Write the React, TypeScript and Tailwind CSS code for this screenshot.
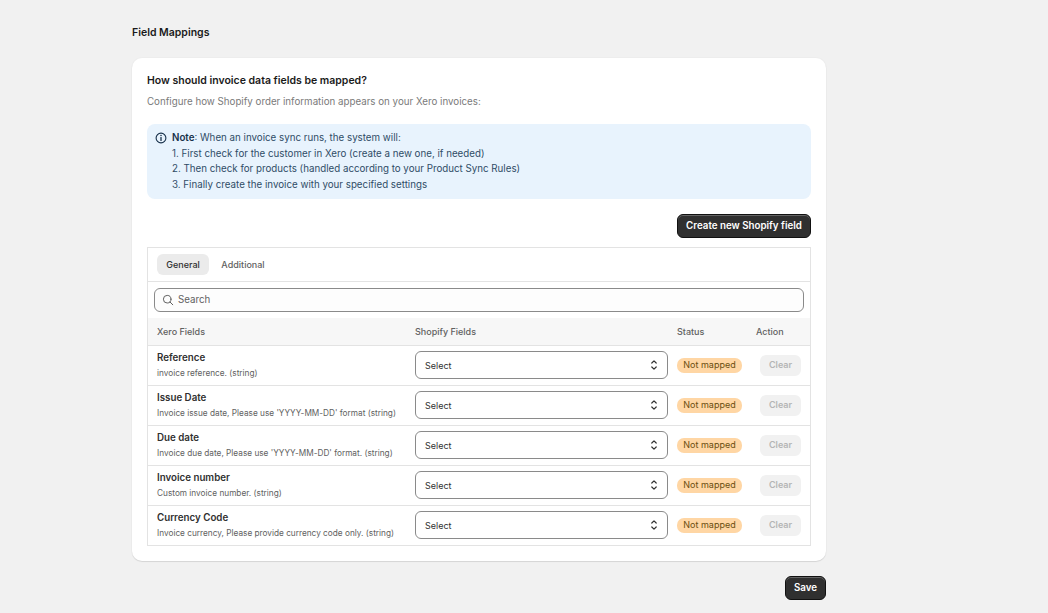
import React from "react";

const rows = [
  ["Reference", "invoice reference. (string)"],
  ["Issue Date", "Invoice issue date, Please use 'YYYY-MM-DD' format (string)"],
  ["Due date", "Invoice due date, Please use 'YYYY-MM-DD' format. (string)"],
  ["Invoice number", "Custom invoice number. (string)"],
  ["Currency Code", "Invoice currency, Please provide currency code only. (string)"],
];

function Chevrons() {
  return (
    <svg width="10" height="14" viewBox="0 0 10 14" fill="none" stroke="#303030" strokeWidth="1.2" strokeLinecap="round" strokeLinejoin="round">
      <path d="M2.8 5 5 2.9 7.2 5" />
      <path d="M2.8 9 5 11.1 7.2 9" />
    </svg>
  );
}

export default function App() {
  return (
    <div className="min-h-[613px] bg-[#f1f1f1] pl-[132px] pt-[26px] font-['Inter',sans-serif] text-[#303030]">
      <div className="w-[694px]">
        <h1 className="h-[14px] text-[10.5px] leading-[14px] font-semibold text-[#1a1a1a]">Field Mappings</h1>
        <div className="mt-[18px] h-[503px] rounded-[10px] bg-white px-[15px] pt-[16px] shadow-[0_1px_1px_rgba(0,0,0,0.1),0_0_0_1px_rgba(0,0,0,0.015)]">
          <h2 className="text-[10.5px] leading-[14px] font-semibold text-[#1a1a1a]">How should invoice data fields be mapped?</h2>
          <p className="mt-[7px] text-[9.75px] leading-[14px] text-[#7a7a7a]">Configure how Shopify order information appears on your Xero invoices:</p>
          <div className="mt-[15px] flex h-[75px] gap-[5px] rounded-[8px] bg-[#e8f3fd] pl-[8px] pt-[6px] text-[9.75px] leading-[15.7px] text-[#2f4c66]">
            <svg className="mt-[2px] shrink-0" width="12" height="12" viewBox="0 0 12 12" fill="none" stroke="#17304a" strokeWidth="1.1" strokeLinecap="round">
              <circle cx="6" cy="6" r="4.9" />
              <path d="M6 5.6v2.8" strokeWidth="1.3" />
              <path d="M6 3.5v.1" strokeWidth="1.5" />
            </svg>
            <div>
              <div><span className="font-semibold text-[#17304a]">Note</span>: When an invoice sync runs, the system will:</div>
              <div>1. First check for the customer in Xero (create a new one, if needed)</div>
              <div>2. Then check for products (handled according to your Product Sync Rules)</div>
              <div>3. Finally create the invoice with your specified settings</div>
            </div>
          </div>
          <div className="mt-[15px] flex justify-end">
            <button className="h-[24px] w-[134px] rounded-[6px] border border-[#111] bg-[#303030] text-[9.75px] font-semibold text-white shadow-[inset_0_1px_0_rgba(255,255,255,0.25)]">Create new Shopify field</button>
          </div>
          <div className="mt-[9px] h-[299px] border border-[#e3e3e3]">
            <div className="flex h-[34px] items-center gap-[3px] border-b border-[#e3e3e3] pl-[9px]">
              <span className="flex h-[21px] w-[52px] items-center justify-center rounded-[6px] bg-[#ebebeb] text-[9px] font-medium text-[#303030]">General</span>
              <span className="flex h-[21px] w-[62px] items-center justify-center text-[9px] font-medium text-[#616161]">Additional</span>
            </div>
            <div className="px-[6px] pt-[6px]">
              <div className="flex h-[24px] items-center gap-[4px] rounded-[6px] border border-[#8a8a8a] bg-[#fdfdfd] pl-[7px]">
                <svg width="12" height="12" viewBox="0 0 12 12" fill="none" stroke="#616161" strokeWidth="1" strokeLinecap="round">
                  <circle cx="5.2" cy="5.2" r="3.8" />
                  <path d="m8 8 2.8 2.8" />
                </svg>
                <span className="text-[9.75px] text-[#616161]">Search</span>
              </div>
            </div>
            <div className="mt-[6px] flex h-[28px] items-center border-b border-[#e3e3e3] bg-[#f7f7f7] pt-[1px] text-[9px] font-medium text-[#616161]">
              <span className="w-[267px] pl-[9px]">Xero Fields</span>
              <span className="w-[262px]">Shopify Fields</span>
              <span className="w-[79px]">Status</span>
              <span>Action</span>
            </div>
            {rows.map(([name, desc], i) => (
              <div key={name} className={`flex items-center pb-[1px] ${i < 4 ? "h-[40px] border-b border-[#e3e3e3]" : "h-[39px]"}`}>
                <div className="w-[267px] pl-[9px]">
                  <div className="text-[9.75px] leading-[14px] font-semibold text-[#303030]">{name}</div>
                  <div className="mt-[2px] text-[8.25px] leading-[12px] text-[#616161]">{desc}</div>
                </div>
                <div className="flex h-[28px] w-[253px] items-center justify-between rounded-[6px] border border-[#8a8a8a] pl-[9px] pr-[8px]">
                  <span className="pt-[2px] text-[9px] text-[#303030]">Select</span>
                  <Chevrons />
                </div>
                <span className="ml-[9px] flex h-[15px] w-[65px] items-center justify-center rounded-[7px] bg-[#ffd6a4] text-[9px] text-[#6b4e10]">Not mapped</span>
                <span className="ml-[18px] flex h-[21px] w-[41px] items-center justify-center rounded-[6px] bg-[#f1f1f1] text-[9px] font-semibold text-[#b5b5b5]">Clear</span>
              </div>
            ))}
          </div>
        </div>
        <div className="mt-[15px] flex justify-end">
          <button className="h-[24px] w-[41px] rounded-[6px] border border-[#111] bg-[#303030] text-[9.75px] font-semibold text-white shadow-[inset_0_1px_0_rgba(255,255,255,0.25)]">Save</button>
        </div>
      </div>
    </div>
  );
}
